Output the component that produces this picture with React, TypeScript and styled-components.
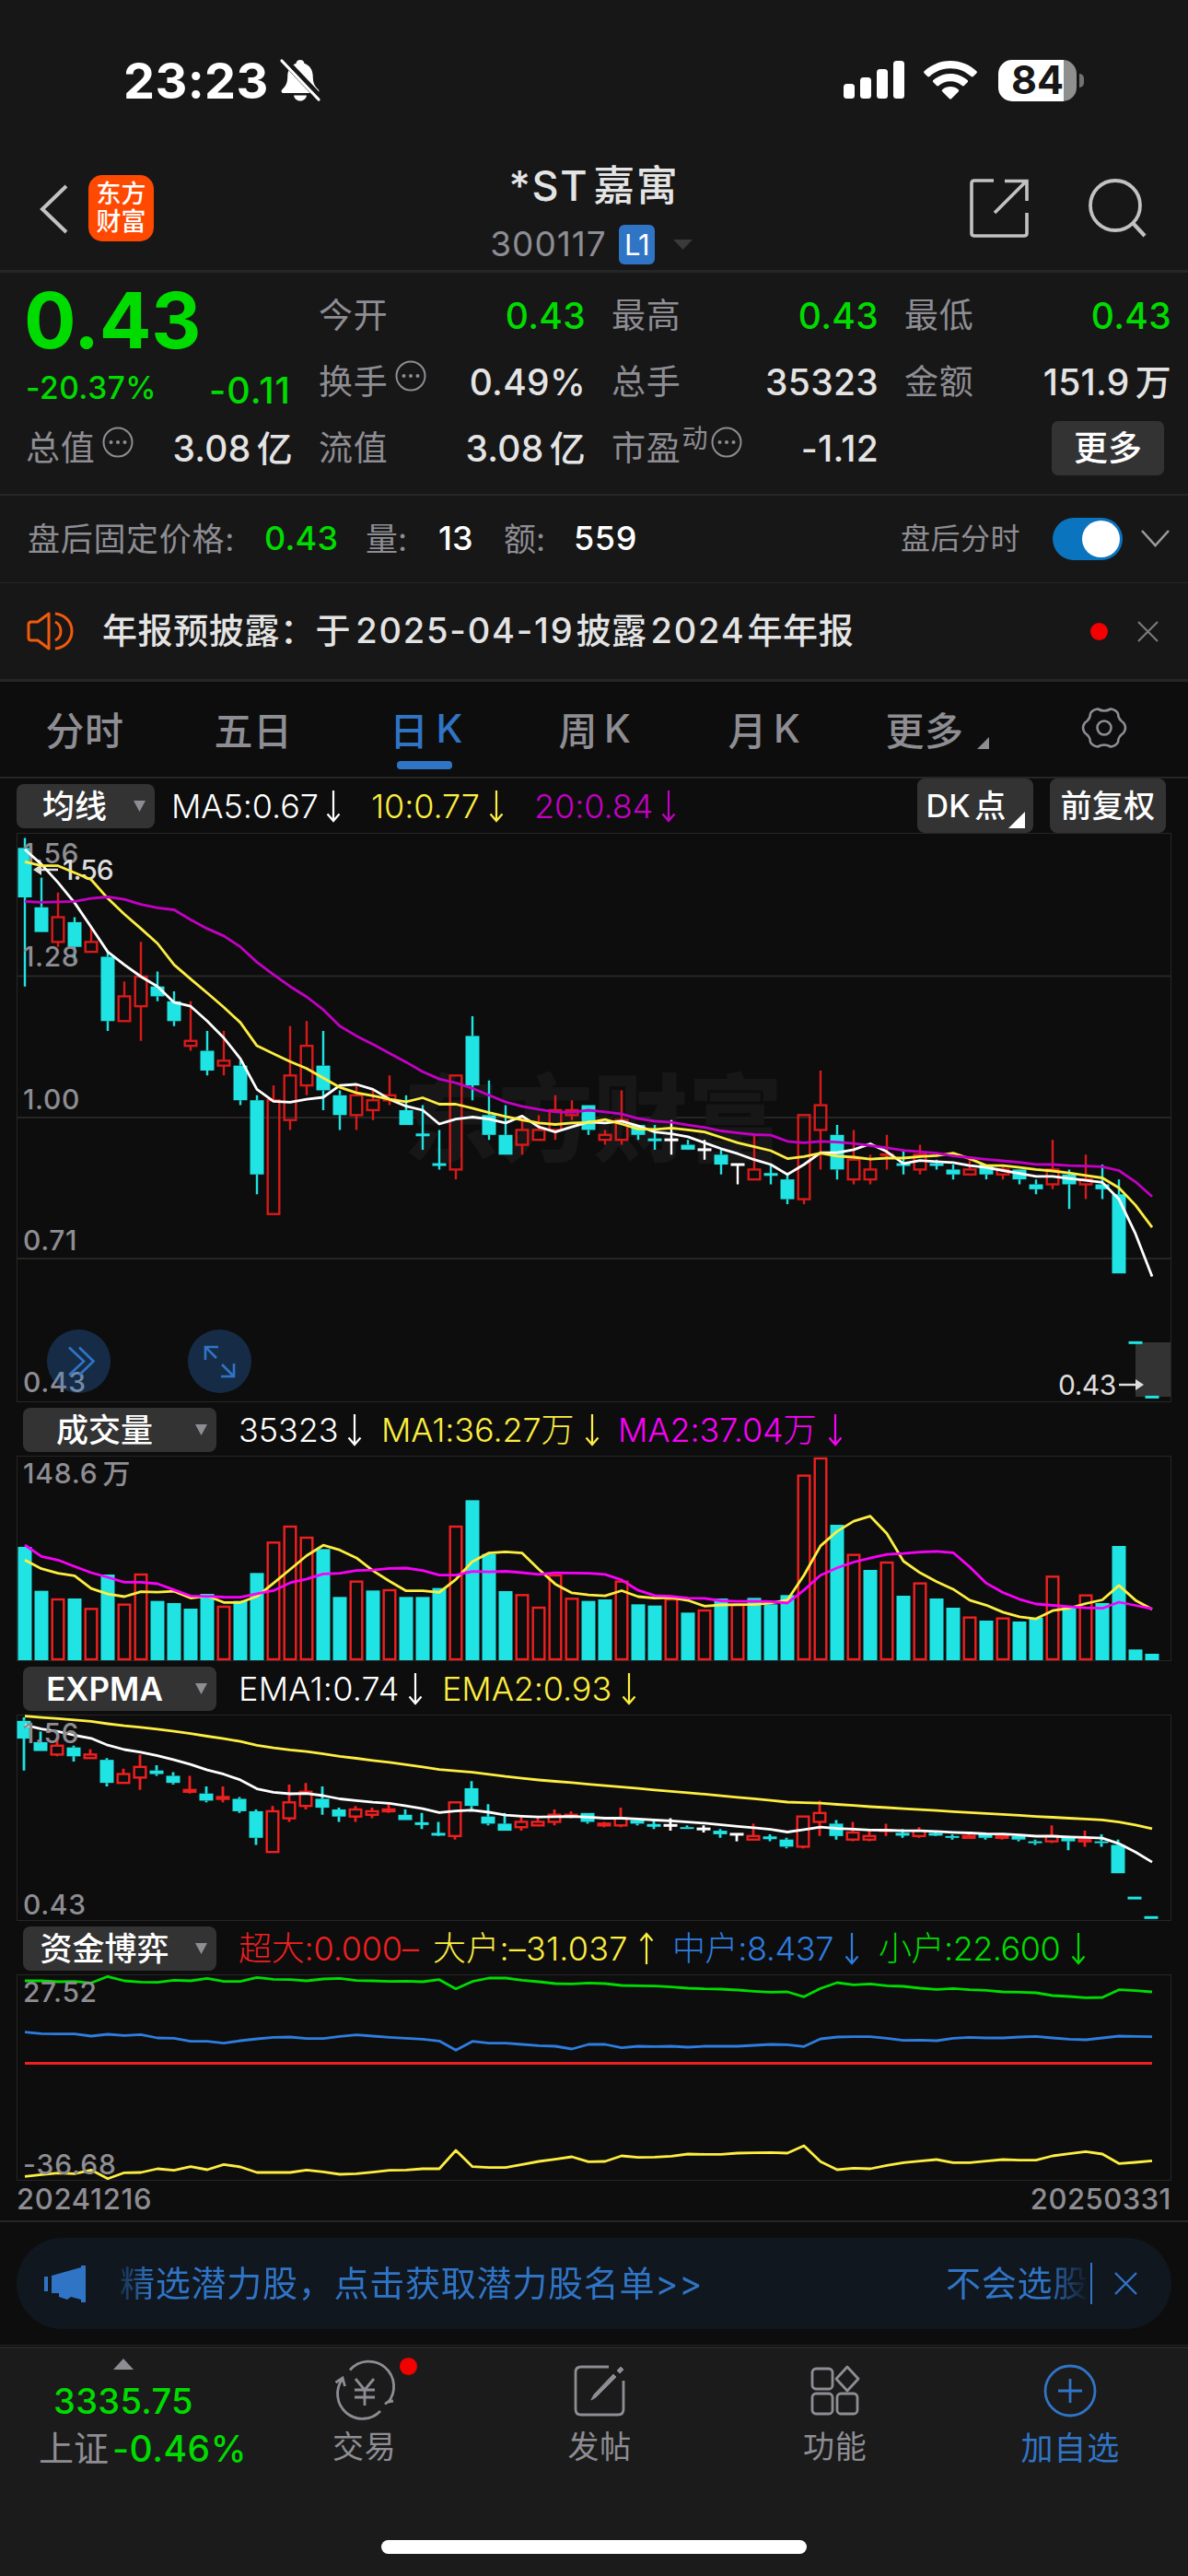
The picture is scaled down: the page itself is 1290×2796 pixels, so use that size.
import React from "react";
import styled, { createGlobalStyle } from "styled-components";

const C = {
  green: "#00dc00",
  gray: "#8e8d93",
  light: "#e4e4e4",
  blue: "#3074c6",
  cyan: "#20e3e3",
  red: "#f02020",
  candleRed: "#d91a1a",
  yellow: "#fdee41",
  purple: "#c400c4",
  magenta: "#fa00fa",
  line: "#262626",
  btn: "#333333",
  panel: "#171717",
  page: "#0d0d0d",
};

const Global = createGlobalStyle`
  * { box-sizing: border-box; }
  body { margin: 0; background: ${C.page}; }
  body, svg text { font-family: Inter, "Noto Sans CJK SC", sans-serif; }
`;

const Screen = styled.div`
  width: 1290px;
  height: 2796px;
  overflow: hidden;
  display: flex;
  flex-direction: column;
  background: ${C.page};
  color: ${C.light};
  & > * { flex-shrink: 0; }
`;

type TxtProps = { $s?: number; $c?: string; $w?: number; $ls?: number; $ml?: number; $mt?: number; $width?: number };
const Txt = styled.span<TxtProps>`
  display: block;
  flex: none;
  white-space: nowrap;
  line-height: 1.2;
  font-size: ${(p) => p.$s ?? 38}px;
  color: ${(p) => p.$c ?? C.light};
  font-weight: ${(p) => p.$w ?? 400};
  letter-spacing: ${(p) => p.$ls ?? 0}px;
  margin-left: ${(p) => p.$ml ?? 0}px;
  margin-top: ${(p) => p.$mt ?? 0}px;
  ${(p) => (p.$width ? `width: ${p.$width}px;` : "")}
`;
const Gap = styled.span<{ $l?: number; $r?: number; $ls?: number }>`
  margin-left: ${(p) => p.$l ?? 0}px;
  margin-right: ${(p) => p.$r ?? 0}px;
  ${(p) => (p.$ls !== undefined ? `letter-spacing: ${p.$ls}px;` : "")}
`;

const Icon = styled.svg<{ $ml?: number; $mt?: number }>`
  display: block;
  flex: none;
  margin-left: ${(p) => p.$ml ?? 0}px;
  margin-top: ${(p) => p.$mt ?? 0}px;
  overflow: visible;
`;

/* ---------- status bar ---------- */
const StatusBar = styled.div`
  height: 174px;
  padding: 0 113px 0 134px;
  display: flex;
  align-items: center;
  background: ${C.panel};
`;
const Spacer = styled.div`flex: 1;`;
const Battery = styled.div`
  width: 85px;
  height: 45px;
  margin-left: 23px;
  border-radius: 15px;
  background: linear-gradient(90deg, #fff 71px, #8f8f8f 71px);
  display: flex;
  align-items: center;
  justify-content: center;
`;
const BatteryNub = styled.div`
  width: 5px;
  height: 15px;
  margin-left: 3px;
  border-radius: 0 5px 5px 0;
  background: #727272;
`;

/* ---------- header ---------- */
const Header = styled.header`
  height: 122px;
  border-bottom: 3px solid ${C.line};
  background: ${C.panel};
  display: grid;
  grid-template-columns: 430px 1fr 430px;
`;
const HeadLeft = styled.div`
  display: flex;
  align-items: flex-start;
  padding: 16px 0 0 42px;
`;
const Logo = styled.div`
  width: 71px;
  height: 72px;
  margin-left: 23px;
  border-radius: 15px;
  background: #ff4800;
  color: #fff;
  display: flex;
  flex-direction: column;
  align-items: center;
  justify-content: center;
  font-size: 27px;
  line-height: 30px;
  font-weight: 500;
`;
const HeadMid = styled.div`
  display: flex;
  flex-direction: column;
  align-items: center;
`;
const CodeRow = styled.div`
  display: flex;
  align-items: center;
  height: 44px;
  margin: 14px 0 0 -6px;
`;
const Badge = styled.div`
  width: 39px;
  height: 43px;
  margin: 0 20px 0 13px;
  border-radius: 6px;
  background: ${C.blue};
  color: #fff;
  font-size: 31px;
  line-height: 43px;
  letter-spacing: -1px;
  text-align: center;
`;
const HeadRight = styled.div`
  display: flex;
  justify-content: flex-end;
  padding: 20px 45px 0 0;
  gap: 64px;
`;

/* ---------- quote ---------- */
const Quote = styled.section`
  height: 242px;
  padding: 11px 20px 0 28px;
  border-bottom: 2px solid ${C.line};
  background: ${C.panel};
  display: grid;
  grid-template-columns: repeat(4, 288px);
  grid-template-rows: repeat(3, 72px);
  column-gap: 30px;
`;
const PriceBlock = styled.div`
  grid-row: span 2;
  display: flex;
  flex-direction: column;
`;
const Price = styled.div`
  height: 82px;
  line-height: 82px;
  margin-left: -2px;
  font-size: 84px;
  font-weight: 700;
  letter-spacing: -0.3px;
  color: ${C.green};
`;
const ChangeRow = styled.div`
  height: 66px;
  display: flex;
  align-items: center;
  justify-content: space-between;
`;
const Cell = styled.div`
  display: flex;
  align-items: center;
`;
const Value = styled(Txt)`
  margin-left: auto;
  margin-right: -2px;
`;
const Sup = styled.span`
  font-size: 28px;
  color: ${C.gray};
  margin: -22px 0 0 1px;
  line-height: 30px;
`;
const MoreBtn = styled.button`
  width: 122px;
  height: 59px;
  margin: -2px 6px 0 auto;
  border: 0;
  border-radius: 7px;
  background: ${C.btn};
  color: #fff;
  font: 500 37px/59px Inter, "Noto Sans CJK SC", sans-serif;
  padding: 0;
`;

const AfterRow = styled.section`
  height: 95px;
  padding: 0 20px 0 30px;
  border-bottom: 1px solid ${C.line};
  background: ${C.panel};
  display: flex;
  align-items: center;
`;
const Toggle = styled.div`
  width: 76px;
  height: 46px;
  margin: 0 20px 0 35px;
  padding: 3px;
  border-radius: 23px;
  background: #0b74bf;
  display: flex;
  justify-content: flex-end;
`;
const Knob = styled.div`
  width: 41px;
  height: 40px;
  border-radius: 50%;
  background: #fff;
`;
const Notice = styled.section`
  height: 107px;
  padding: 0 32px 0 29px;
  border-bottom: 3px solid ${C.line};
  background: ${C.panel};
  display: flex;
  align-items: center;
`;
const Dot = styled.div`
  width: 19px;
  height: 19px;
  border-radius: 50%;
  background: #f50000;
`;

/* ---------- tabs ---------- */
const Tabs = styled.nav`
  height: 105px;
  border-bottom: 2px solid ${C.line};
  display: grid;
  grid-template-columns: 184px 182px 194px 172px 196px 179px 183px;
`;
const Tab = styled.div<{ $on?: boolean }>`
  display: flex;
  justify-content: center;
  align-items: center;
  padding-bottom: 3px;
  font-size: 42px;
  letter-spacing: 0.5px;
  font-weight: 500;
  color: ${(p) => (p.$on ? C.blue : C.gray)};
  position: relative;
  ${(p) =>
    p.$on
      ? `&::after { content: ""; position: absolute; bottom: 8px; left: 65px; width: 60px; height: 9px; border-radius: 4px; background: ${C.blue}; }`
      : ""}
`;

/* ---------- indicator rows ---------- */
const LegendRow = styled.div<{ $h: number; $pad: number; $pl: number }>`
  height: ${(p) => p.$h}px;
  padding: ${(p) => p.$pad}px 24px 0 ${(p) => p.$pl}px;
  display: flex;
  align-items: flex-start;
`;
const PickBtn = styled.div<{ $wide?: boolean; $bold?: boolean }>`
  width: ${(p) => (p.$wide ? 210 : 150)}px;
  height: 48px;
  flex: none;
  border-radius: 8px;
  background: ${C.btn};
  color: #fff;
  display: grid;
  grid-template-columns: 1fr 14px;
  column-gap: ${(p) => (p.$wide ? 9 : 0)}px;
  align-items: center;
  justify-items: center;
  padding: 0 10px 0 0;
  font-size: 35px;
  line-height: 48px;
  font-weight: ${(p) => (p.$bold ? 600 : 500)};
`;
const Legend = styled.div<{ $c: string; $w: number; $ml?: number; $ls?: number }>`
  width: ${(p) => p.$w}px;
  height: 48px;
  flex: none;
  margin-left: ${(p) => p.$ml ?? 0}px;
  display: flex;
  align-items: center;
  color: ${(p) => p.$c};
  font-size: 36px;
  line-height: 48px;
  letter-spacing: ${(p) => p.$ls ?? -0.1}px;
  font-weight: 300;
  white-space: nowrap;
  & > svg { margin-left: auto; }
`;
const ModeBtn = styled.div`
  width: 126px;
  height: 59px;
  margin: -6px 0 0 18px;
  flex: none;
  border-radius: 8px;
  background: ${C.btn};
  color: #fff;
  font-size: 34px;
  line-height: 59px;
  font-weight: 500;
  letter-spacing: 0.4px;
  display: flex;
  justify-content: center;
`;
const Plot = styled.svg`
  display: block;
  flex: none;
  margin-left: 18px;
`;
const Dates = styled.div`
  height: 45px;
  padding: 0 18px 4px 18px;
  border-bottom: 2px solid ${C.line};
  display: flex;
  align-items: center;
  justify-content: space-between;
`;

/* ---------- banner + nav ---------- */
const BannerWrap = styled.div`
  height: 134px;
  padding: 17px 18px 0;
  border-bottom: 1px solid ${C.line};
`;
const Banner = styled.div`
  height: 99px;
  padding: 0 37px 0 30px;
  border-radius: 50px;
  background: #10171f;
  display: flex;
  align-items: center;
`;
const FadeText = styled.div<{ $w: number; $fade: string; $ml: number }>`
  width: ${(p) => p.$w}px;
  margin-left: ${(p) => p.$ml}px;
  flex: none;
  white-space: nowrap;
  color: ${C.blue};
  font-size: 38px;
  line-height: 54px;
  padding-bottom: 2px;
  letter-spacing: 0.75px;
  -webkit-mask-image: ${(p) => p.$fade};
  mask-image: ${(p) => p.$fade};
`;
const Divider = styled.div`
  width: 2px;
  height: 45px;
  margin: 0 24px 0 0;
  background: ${C.blue};
`;
const BottomBar = styled.footer`
  height: 249px;
  margin-top: 1px;
  border-top: 2px solid ${C.line};
  background: #1b1b1b;
  display: flex;
  flex-direction: column;
  justify-content: space-between;
  align-items: center;
  padding-bottom: 24px;
`;
const NavGrid = styled.div`
  width: 1290px;
  display: grid;
  grid-template-columns: 268px repeat(4, 255.5px);
`;
const IndexCell = styled.div`
  display: flex;
  flex-direction: column;
  align-items: center;
  padding-top: 11px;
`;
const IndexRow = styled.div`
  display: flex;
  align-items: center;
  align-self: flex-start;
  margin: 5px 0 0 38px;
  padding-left: 4px;
`;
const NavItem = styled.div`
  position: relative;
  display: flex;
  flex-direction: column;
  align-items: center;
  gap: 12px;
  padding-top: 17px;
`;
const NavDot = styled(Dot)`
  position: absolute;
  left: 166px;
  top: 10px;
`;
const HomeBar = styled.div`
  width: 462px;
  height: 15px;
  border-radius: 8px;
  background: #fff;
`;

/* ---------- data ---------- */
// high, body top, body bottom, low (in cents), kind: r = up, c = down, w = flat
type K = [number, number, number, number, string];
const candles: K[] = [
  [156, 154, 144, 126, "c"], [148, 142, 137, 137, "c"], [145, 140, 135, 134, "r"], [140, 139, 134, 131, "c"],
  [138, 135, 133, 133, "r"], [133, 132, 119, 117, "c"], [127, 124, 119, 119, "r"], [135, 128, 122, 115, "r"],
  [129, 126, 124, 123, "c"], [125, 123, 119, 118, "c"], [123, 115, 114, 113, "r"], [117, 113, 109, 108, "c"],
  [117, 111, 110, 108, "r"], [111, 110, 103, 102, "c"], [104, 103, 88, 84, "c"], [106, 103, 80, 80, "r"],
  [118, 108, 99, 97, "r"], [119, 114, 106, 104, "r"], [117, 110, 105, 101, "c"], [105, 104, 100, 97, "c"],
  [106, 104, 100, 97, "r"], [105, 103, 101, 99, "r"], [108, 104, 103, 102, "r"], [104, 101, 98, 98, "c"],
  [102, 96, 96, 93, "c"], [97, 90, 90, 89, "c"], [108, 108, 89, 87, "r"], [120, 116, 106, 103, "c"],
  [107, 100, 96, 95, "c"], [102, 96, 92, 92, "c"], [100, 97, 94, 92, "r"], [100, 97, 95, 95, "r"],
  [104, 101, 97, 95, "r"], [103, 101, 100, 99, "r"], [102, 102, 97, 96, "c"], [97, 96, 95, 94, "r"],
  [105, 99, 95, 94, "r"], [98, 98, 96, 95, "c"], [98, 95, 95, 93, "c"], [99, 95, 95, 92, "w"],
  [95, 94, 93, 93, "c"], [95, 93, 93, 91, "w"], [93, 92, 90, 88, "c"], [90, 90, 90, 86, "w"],
  [96, 89, 87, 87, "r"], [90, 88, 88, 86, "c"], [88, 87, 83, 82, "c"], [100, 100, 83, 82, "r"],
  [109, 102, 97, 89, "r"], [98, 96, 89, 87, "c"], [97, 91, 87, 86, "r"], [92, 89, 87, 86, "r"],
  [96, 92, 92, 89, "r"], [93, 90, 90, 88, "c"], [94, 92, 89, 88, "r"], [91, 90, 90, 89, "c"],
  [90, 89, 88, 87, "c"], [91, 89, 88, 88, "r"], [90, 90, 88, 87, "c"], [90, 89, 88, 87, "r"],
  [89, 89, 87, 86, "c"], [87, 86, 85, 84, "c"], [95, 89, 86, 85, "r"], [89, 88, 86, 81, "c"],
  [92, 87, 86, 83, "r"], [90, 86, 85, 83, "c"], [87, 84, 68, 68, "c"], [54, 54, 54, 54, "c"],
  [43, 43, 43, 43, "c"],
];
const closes = candles.map((k) => (k[4] === "c" ? k[2] : k[1]));
const X = (i: number) => 27 + 18 * i;

const average = (src: number[], n: number, head: number[]) =>
  src.map((_, i) => (i < head.length ? head[i] : src.slice(i - n + 1, i + 1).reduce((a, b) => a + b, 0) / n));
const ema = (n: number, start: number) => {
  const out = [start];
  for (let i = 1; i < closes.length; i++) out.push(out[i - 1] + ((closes[i] - out[i - 1]) * 2) / (n + 1));
  return out;
};
const points = (v: number[], y: (n: number) => number) => v.map((n, i) => `${X(i)},${y(n).toFixed(1)}`).join(" ");

const ma5 = average(closes, 5, [153.7, 150.7, 147, 142.9]);
const ma10 = average(closes, 10, [151.2, 150.4, 150.4, 149, 147.6, 143.8, 140.6, 137.7, 134.7]);
const ma20 = average(closes, 20, [
  143.2, 143, 143.1, 143.2, 143.8, 144.1, 143.6, 142.6, 141.9, 141.5, 139.5, 137.7, 136.2, 134, 130.9, 128.4, 126,
  123.9, 121.3,
]);

const volume = [
  369, 226, 201, 201, 170, 279, 184, 282, 193, 186, 168, 216, 177, 193, 284, 386, 438, 402, 362, 206, 259, 227, 231,
  206, 206, 235, 438, 521, 346, 225, 215, 174, 279, 203, 193, 198, 259, 182, 178, 201, 155, 165, 201, 182, 203, 182,
  212, 604, 660, 441, 346, 294, 321, 210, 253, 201, 171, 142, 129, 139, 126, 138, 275, 170, 214, 186, 372, 35, 21,
];
const volumeUp = new Set([
  2, 4, 6, 7, 12, 15, 16, 17, 20, 22, 26, 30, 31, 32, 33, 36, 39, 41, 43, 47, 48, 50, 52, 54, 57, 59, 62, 64,
]);
const vma1 = average(volume, 5, [326, 298, 283, 275]);
const vma2 = average(volume, 10, [375, 338, 326, 305, 285, 270, 254, 254, 249]);

const small = [
  180, 180, 183, 182, 187, 166, 180, 184, 185, 178, 180, 172, 182, 182, 169, 175, 176, 180, 174, 172, 179, 180, 182,
  181, 183, 176, 206, 182, 171, 171, 178, 183, 189, 190, 187, 189, 195, 196, 197, 200, 204, 206, 207, 210, 214, 217,
  216, 232, 205, 186, 193, 190, 196, 198, 204, 208, 205, 209, 211, 216, 217, 219, 228, 231, 235, 234, 209, 212, 216,
];
const mid = [
  347, 352, 353, 353, 360, 354, 358, 355, 366, 367, 377, 377, 383, 375, 369, 364, 363, 368, 368, 361, 356, 360, 364,
  367, 370, 376, 406, 377, 383, 383, 387, 391, 393, 402, 387, 387, 398, 393, 394, 393, 396, 393, 393, 393, 390, 387,
  388, 394, 369, 363, 362, 362, 367, 374, 373, 375, 367, 364, 366, 366, 363, 361, 366, 370, 372, 366, 360, 361, 362,
];
const large = [
  817, 811, 806, 808, 796, 824, 805, 804, 792, 797, 785, 795, 778, 786, 804, 804, 804, 796, 802, 810, 808, 803, 797,
  796, 792, 792, 732, 785, 788, 788, 778, 768, 761, 753, 769, 768, 750, 755, 754, 751, 744, 745, 745, 741, 740, 739,
  741, 717, 769, 795, 790, 792, 781, 772, 767, 762, 772, 772, 767, 762, 764, 764, 750, 743, 736, 744, 775, 771, 766,
];

/* ---------- chart pieces ---------- */
const Candles = ({ y, dx, wick, red }: { y: (p: number) => number; dx: number; wick: number; red: string }) => (
  <g>
    {candles.map(([hi, top, bot, lo, kind], i) => {
      const x = X(i) + dx;
      const color = kind === "c" ? C.cyan : kind === "r" ? red : "#fff";
      const hollow = kind === "r" && top !== bot;
      return (
        <g key={i} stroke={color} fill={color}>
          <path d={`M${x} ${y(hi)}V${y(top)}M${x} ${y(bot)}V${y(lo)}`} strokeWidth={wick} />
          {hollow ? (
            <rect x={x - 6.3} y={y(top)} width={12.6} height={y(bot) - y(top)} fill="none" strokeWidth={2.4} />
          ) : top === bot ? (
            <rect x={x - 7.5} y={y(top) - 1.5} width={15} height={3} stroke="none" />
          ) : (
            <rect x={x - 7.5} y={y(top)} width={15} height={y(bot) - y(top)} stroke="none" />
          )}
        </g>
      );
    })}
  </g>
);
const Line = ({ v, y, c }: { v: number[]; y: (n: number) => number; c: string }) => (
  <polyline points={points(v, y)} fill="none" stroke={c} strokeWidth={2.8} strokeLinejoin="round" />
);
const AxisText = ({ y, children, ls = 0.6 }: { y: number; children: React.ReactNode; ls?: number }) => (
  <text x={25} y={y + 10.5} fill={C.gray} fontSize={30} letterSpacing={ls} fontWeight={500}>
    {children}
  </text>
);
const Arrow = ({ up }: { up?: boolean }) => (
  <Icon width="16" height="36" viewBox="0 0 16 36" fill="none" stroke="currentColor" strokeWidth="2.2">
    <path d={up ? "M8 35V2M1.500 9.500 8 2l6.500 7.500" : "M8 1v33M1.500 26.500 8 34l6.500-7.500"} />
  </Icon>
);
const Caret = () => (
  <Icon width="13" height="12" viewBox="0 0 13 12">
    <path d="M0 0h13L6.500 12z" fill={C.gray} />
  </Icon>
);
const InfoDots = ({ ml = 7 }: { ml?: number }) => (
  <Icon $ml={ml} $mt={-14} width="34" height="34" viewBox="0 0 34 34" fill="none" stroke={C.gray} strokeWidth="2">
    <circle cx="17" cy="17" r="15.500" />
    <g fill={C.gray} stroke="none">
      <circle cx="9.500" cy="17" r="2" />
      <circle cx="17" cy="17" r="2" />
      <circle cx="24.500" cy="17" r="2" />
    </g>
  </Icon>
);

const priceY = (p: number) => 909.6 + (156 - p) * 5.37;
const expY = (p: number) => 1864 + (156 - p) * 1.923;
const volY = (v: number) => 1802 - v / 3;
const fundY = (v: number) => 2090 + v / 3;

const KChart = () => (
  <Plot width="1254" height="618" viewBox="18 904 1254 618">
    <rect x="18.500" y="904.500" width="1253" height="617" fill="none" stroke={C.line} />
    <path d="M19 1059.500H1271M19 1213H1271M19 1366H1271" stroke={C.line} strokeWidth="2" />
    <text x="438" y="1253" fontSize="103" fontWeight="900" fill="#171717">东方财富</text>
    <rect x="1233" y="1457" width="38" height="59" fill="#333" />
    <AxisText y={1500.5}>0.43</AxisText>
    <circle cx="85.500" cy="1477.500" r="34.500" fill="#3080e0" fillOpacity="0.27" />
    <circle cx="238.500" cy="1477.500" r="34.500" fill="#3080e0" fillOpacity="0.27" />
    <Candles y={priceY} dx={0} wick={2.4} red={C.candleRed} />
    <AxisText y={926.5}>1.56</AxisText>
    <AxisText y={1038.5}>1.28</AxisText>
    <AxisText y={1193}>1.00</AxisText>
    <AxisText y={1346.5}>0.71</AxisText>
    <text x="68" y="955" fontSize="30" fill="#ddd" fontWeight="500" letterSpacing="-1">1.56</text>
    <path d="M63 944H44" stroke="#ddd" strokeWidth="2.500" />
    <path d="M36 944l9-6v12z" fill="#ddd" />
    <Line v={ma5} y={priceY} c="#fff" />
    <Line v={ma10} y={priceY} c={C.yellow} />
    <Line v={ma20} y={priceY} c={C.purple} />
    <text x="1149" y="1514" fontSize="30" fill="#ddd" letterSpacing="-0.500">0.43</text>
    <path d="M1215 1503h20" stroke="#ddd" strokeWidth="2.500" />
    <path d="M1242 1503l-9-6v12z" fill="#ddd" />
    <g fill="none" stroke={C.blue} strokeWidth="2.600">
      <path d="M75 1462.500l16 15-16 15M86 1462.500l15.500 15-15.500 15" />
      <path d="M223 1476v-14h14M223 1462l12 12M254 1480v14h-14M254 1494l-13-13" />
    </g>
  </Plot>
);
const VolumeChart = () => (
  <Plot width="1254" height="223" viewBox="18 1580 1254 223">
    <rect x="18.500" y="1580.500" width="1253" height="222" fill="none" stroke={C.line} />
    {volume.map((v, i) =>
      volumeUp.has(i) ? (
        <rect key={i} x={X(i) - 6.3} y={volY(v) + 1} width={12.6} height={v / 3 - 2} fill="none" stroke={C.red} strokeWidth={2.4} />
      ) : (
        <rect key={i} x={X(i) - 7.5} y={volY(v)} width={15} height={v / 3} fill={C.cyan} />
      )
    )}
    <AxisText y={1599.5} ls={0.8}>
      148.6<tspan dx="5">万</tspan>
    </AxisText>
    <Line v={vma1} y={volY} c={C.yellow} />
    <Line v={vma2} y={volY} c={C.magenta} />
  </Plot>
);
const ExpmaChart = () => (
  <Plot width="1254" height="224" viewBox="18 1861 1254 224">
    <rect x="18.500" y="1861.500" width="1253" height="223" fill="none" stroke={C.line} />
    <Candles y={expY} dx={-1} wick={2.8} red={C.red} />
    <Line v={ema(12, 151.7)} y={expY} c="#fff" />
    <Line v={ema(50, 156.7)} y={expY} c={C.yellow} />
    <AxisText y={1881}>1.56</AxisText>
    <AxisText y={2067}>0.43</AxisText>
  </Plot>
);
const FundChart = () => (
  <Plot width="1254" height="224" viewBox="18 2143 1254 224">
    <rect x="18.500" y="2143.500" width="1253" height="223" fill="none" stroke={C.line} />
    <Line v={small} y={fundY} c={C.green} />
    <Line v={mid} y={fundY} c="#2e7de0" />
    <path d="M27 2239.500H1251" stroke={C.red} strokeWidth="3" />
    <Line v={large} y={fundY} c={C.yellow} />
    <AxisText y={2162}>27.52</AxisText>
    <AxisText y={2349} ls={0.9}>-36.68</AxisText>
  </Plot>
);

type StatProps = { label: string; value: string; unit?: string; green?: boolean; extra?: React.ReactNode };
const Stat = ({ label, value, unit, green, extra }: StatProps) => (
  <Cell>
    <Txt $s={37} $c={C.gray} $ls={0.8}>{label}</Txt>
    {extra}
    <Value as="div" $s={39} $w={500} $ls={0.3} $c={green ? C.green : C.light}>
      {value}
      {unit ? <Gap $l={6}>{unit}</Gap> : null}
    </Value>
  </Cell>
);

export default function App() {
  return (
    <Screen>
      <Global />
      <StatusBar>
        <Txt $s={54} $w={700} $c="#fff" $mt={2} $ls={0.4}>23:23</Txt>
        <Icon $ml={11} width="46" height="46" viewBox="0 0 46 46">
          <path d="M23 1c-2.600 0-4.200 1.600-4.400 3.800C12.500 7 9.500 12 9.300 18c-.2 8-1.500 11-5.800 15-1.800 2-.8 4 1.500 4h36c2.300 0 3.300-2 1.500-4-4.300-4-5.600-7-5.800-15-.2-6-3.200-11-9.300-13.200C27.200 2.600 25.600 1 23 1z" fill="#fff" />
          <path d="M16 39.500h14c-.6 3.500-3.300 6-7 6s-6.400-2.500-7-6z" fill="#fff" />
          <path d="M5 1 45 43" stroke={C.panel} strokeWidth="8" />
          <path d="M3 2 43 44" stroke="#fff" strokeWidth="3.200" strokeLinecap="round" />
        </Icon>
        <Spacer />
        <Icon width="66" height="42" viewBox="0 0 66 42" fill="#fff">
          <rect x="0" y="25" width="12" height="16" rx="3.500" />
          <rect x="18" y="18" width="12" height="23" rx="3.500" />
          <rect x="36" y="9" width="12" height="32" rx="3.500" />
          <rect x="54" y="0" width="12" height="41" rx="3.500" />
        </Icon>
        <Icon $ml={21} width="58" height="42" viewBox="0 0 58 42" fill="#fff">
          <path d="M29 0C18 0 8 4.300 .6 11.200c-.7.700-.7 1.500 0 2.200l3.600 3.700c.6.600 1.500.6 2.200 0C12.400 11.500 20.300 8.200 29 8.200s16.600 3.300 22.600 8.900c.7.600 1.600.6 2.200 0l3.600-3.700c.7-.7.7-1.500 0-2.200C50 4.300 40 0 29 0z" />
          <path d="M29 14c-7.200 0-13.700 2.700-18.600 7.100-.7.700-.7 1.500 0 2.200l3.700 3.700c.6.600 1.500.6 2.200.1 3.400-3 7.800-4.900 12.700-4.900s9.300 1.900 12.700 4.900c.7.500 1.600.5 2.200-.1l3.700-3.700c.7-.7.7-1.500 0-2.200C42.700 16.700 36.200 14 29 14z" />
          <path d="M29 28c-3.300 0-6.300 1.200-8.700 3.200-.7.600-.7 1.500 0 2.200l7.500 7.600c.7.700 1.700.7 2.400 0l7.500-7.600c.7-.7.7-1.600 0-2.200C35.300 29.200 32.300 28 29 28z" />
        </Icon>
        <Battery>
          <Txt $s={43} $w={700} $c={C.panel}>84</Txt>
        </Battery>
        <BatteryNub />
      </StatusBar>

      <Header>
        <HeadLeft>
          <Icon $mt={10} width="31" height="54" viewBox="0 0 31 54" fill="none" stroke="#c2c2c2" strokeWidth="4">
            <path d="M30 2 4 27l26 25" />
          </Icon>
          <Logo>
            <span>东方</span>
            <span>财富</span>
          </Logo>
        </HeadLeft>
        <HeadMid>
          <Txt $s={45} $w={500} $ls={1.6} $mt={1}>
            *ST<Gap $l={5}>嘉寓</Gap>
          </Txt>
          <CodeRow>
            <Txt $s={37} $c={C.gray} $ls={1}>300117</Txt>
            <Badge>L1</Badge>
            <Icon width="21" height="11" viewBox="0 0 21 11">
              <path d="M0 0h21L10.500 11z" fill="#3a3a3a" />
            </Icon>
          </CodeRow>
        </HeadMid>
        <HeadRight>
          <Icon width="64" height="64" viewBox="0 0 64 64" fill="none" stroke="#c2c2c2" strokeWidth="3.600">
            <path d="M26 2H5Q2 2 2 5v54q0 3 3 3h54q3 0 3-3V37M38 2.500h24V24M61 3 27 37" />
          </Icon>
          <Icon width="64" height="64" viewBox="0 0 64 64" fill="none" stroke="#c2c2c2" strokeWidth="3.800">
            <circle cx="30" cy="29" r="27" />
            <path d="m49 48 13 14" strokeWidth="4.200" />
          </Icon>
        </HeadRight>
      </Header>

      <Quote>
        <PriceBlock>
          <Price>0.43</Price>
          <ChangeRow>
            <Txt $s={33.5} $w={500} $c={C.green} $ls={0.5} $mt={2}>-20.37%</Txt>
            <Txt $s={39.5} $w={500} $c={C.green} $ls={1} $mt={10}>-0.11</Txt>
          </ChangeRow>
        </PriceBlock>
        <Stat label="今开" value="0.43" green />
        <Stat label="最高" value="0.43" green />
        <Stat label="最低" value="0.43" green />
        <Stat label="换手" value="0.49%" extra={<InfoDots />} />
        <Stat label="总手" value="35323" />
        <Stat label="金额" value="151.9" unit="万" />
        <Stat label="总值" value="3.08" unit="亿" extra={<InfoDots />} />
        <Stat label="流值" value="3.08" unit="亿" />
        <Stat
          label="市盈"
          value="-1.12"
          extra={
            <>
              <Sup>动</Sup>
              <InfoDots ml={3} />
            </>
          }
        />
        <Cell>
          <MoreBtn>更多</MoreBtn>
        </Cell>
      </Quote>

      <AfterRow>
        <Txt $s={35} $c={C.gray} $ls={0.7} $width={257}>盘后固定价格:</Txt>
        <Txt $s={36} $w={500} $c={C.green} $ls={0.2} $width={110}>0.43</Txt>
        <Txt $s={35} $c={C.gray} $width={79}>量:</Txt>
        <Txt $s={36} $w={500} $c="#fff" $width={71}>13</Txt>
        <Txt $s={35} $c={C.gray} $width={76}>额:</Txt>
        <Txt $s={36} $w={500} $c="#fff" $ls={0.6}>559</Txt>
        <Spacer />
        <Txt $s={32} $c={C.gray} $ls={0.5}>盘后分时</Txt>
        <Toggle>
          <Knob />
        </Toggle>
        <Icon width="31" height="20" viewBox="0 0 31 20" fill="none" stroke="#9a9a9a" strokeWidth="2.600">
          <path d="m1 1 14.500 16L30 1" />
        </Icon>
      </AfterRow>

      <Notice>
        <Icon width="52" height="44" viewBox="0 0 52 44" fill="none" stroke="#f25a0c" strokeWidth="3">
          <path d="M24 3v38L12 32H5q-3 0-3-3V15q0-3 3-3h7z" strokeLinejoin="round" />
          <path d="M31 12c8 4 8 16 0 20M31 3c24 3 24 35 0 38" />
        </Icon>
        <Txt $s={38} $w={500} $ls={0.6} $ml={30}>
          年报预披露：于
          <Gap $l={5} $r={2} $ls={1.8}>2025-04-19</Gap>
          披露
          <Gap $l={4} $r={2} $ls={1.8}>2024</Gap>
          年年报
        </Txt>
        <Spacer />
        <Dot />
        <Icon $ml={32} width="23" height="23" viewBox="0 0 23 23" stroke="#7a7a7a" strokeWidth="2.200">
          <path d="m1 1 21 21M22 1 1 22" />
        </Icon>
      </Notice>

      <Tabs>
        <Tab>分时</Tab>
        <Tab>五日</Tab>
        <Tab $on>
          日<Gap $l={8}>K</Gap>
        </Tab>
        <Tab>
          周<Gap $l={7}>K</Gap>
        </Tab>
        <Tab>
          月<Gap $l={7}>K</Gap>
        </Tab>
        <Tab>
          更多
          <Icon $ml={14} $mt={32} width="13" height="13" viewBox="0 0 13 13">
            <path d="M13 0v13H0z" fill={C.gray} />
          </Icon>
        </Tab>
        <Tab>
          <Icon width="50" height="46" viewBox="0 0 50 46" fill="none" stroke={C.gray} strokeWidth="2.600">
            <path d="M18 2.500q7 4 14 0 6 1 8 5 0 6 6 10 4 5.500 0 11-6 4-6 10-2 4-8 5-7-4-14 0-6-1-8-5 0-6-6-10-4-5.500 0-11 6-4 6-10 2-4 8-5z" strokeLinejoin="round" />
            <circle cx="25" cy="23" r="7.500" />
          </Icon>
        </Tab>
      </Tabs>

      <LegendRow $h={59} $pad={6} $pl={18}>
        <PickBtn>均线<Caret /></PickBtn>
        <Legend $c="#fff" $w={184} $ml={18}>MA5:0.67<Arrow /></Legend>
        <Legend $c={C.yellow} $w={144} $ml={33}>10:0.77<Arrow /></Legend>
        <Legend $c={C.purple} $w={154} $ml={33}>20:0.84<Arrow /></Legend>
        <Spacer />
        <ModeBtn>
          DK<Gap $l={4}>点</Gap>
          <Icon $ml={2} $mt={36} width="18" height="18" viewBox="0 0 18 18">
            <path d="M18 0v18H0z" fill="#fff" />
          </Icon>
        </ModeBtn>
        <ModeBtn>前复权</ModeBtn>
      </LegendRow>
      <KChart />

      <LegendRow $h={58} $pad={6} $pl={25}>
        <PickBtn $wide>成交量<Caret /></PickBtn>
        <Legend $c="#fff" $w={134} $ml={24}>35323<Arrow /></Legend>
        <Legend $c={C.yellow} $w={237} $ml={21}>MA1:36.27万<Arrow /></Legend>
        <Legend $c={C.magenta} $w={244} $ml={20}>MA2:37.04万<Arrow /></Legend>
      </LegendRow>
      <VolumeChart />

      <LegendRow $h={58} $pad={6} $pl={25}>
        <PickBtn $wide $bold>EXPMA<Caret /></PickBtn>
        <Legend $c="#fff" $w={200} $ml={24} $ls={0.2}>EMA1:0.74<Arrow /></Legend>
        <Legend $c={C.yellow} $w={211} $ml={21} $ls={-0.1}>EMA2:0.93<Arrow /></Legend>
      </LegendRow>
      <ExpmaChart />

      <LegendRow $h={58} $pad={6} $pl={25}>
        <PickBtn $wide>资金博弈<Caret /></PickBtn>
        <Legend $c={C.red} $w={198} $ml={24} $ls={-0.2}>超大:0.000–</Legend>
        <Legend $c={C.yellow} $w={240} $ml={13} $ls={0.2}>大户:–31.037<Arrow up /></Legend>
        <Legend $c="#2e7de0" $w={203} $ml={20} $ls={-0.4}>中户:8.437<Arrow /></Legend>
        <Legend $c={C.green} $w={225} $ml={21} $ls={-0.5}>小户:22.600<Arrow /></Legend>
      </LegendRow>
      <FundChart />
      <Dates>
        <Txt $s={31} $c={C.gray} $w={500} $ls={0.7}>20241216</Txt>
        <Txt $s={31} $c={C.gray} $w={500} $ls={0.5}>20250331</Txt>
      </Dates>

      <BannerWrap>
        <Banner>
          <Icon width="46" height="40" viewBox="0 0 46 40" fill={C.blue}>
            <path d="M0 12h4v16H0zM8 11 40 2V0h5v40h-5v-3l-11-3-4 3-9-3v-4H8z" />
          </Icon>
          <FadeText $w={640} $ml={36} $fade="linear-gradient(90deg, rgba(0,0,0,.25), #000 34px)">
            精选潜力股，点击获取潜力股名单&gt;&gt;
          </FadeText>
          <Spacer />
          <FadeText $w={157} $ml={0} $fade="linear-gradient(90deg, #000 110px, transparent 155px)">
            不会选股
          </FadeText>
          <Divider />
          <Icon width="25" height="25" viewBox="0 0 25 25" stroke={C.blue} strokeWidth="2.400">
            <path d="m1 1 23 23M24 1 1 24" />
          </Icon>
        </Banner>
      </BannerWrap>

      <BottomBar>
        <NavGrid>
          <IndexCell>
            <Icon width="22" height="12" viewBox="0 0 22 12">
              <path d="M11 0 22 12H0z" fill={C.gray} />
            </Icon>
            <Txt $s={38} $w={500} $c={C.green} $ls={0.3} $mt={12}>3335.75</Txt>
            <IndexRow>
              <Txt $s={38} $c={C.gray}>上证</Txt>
              <Txt $s={39} $w={500} $c={C.green} $ml={4} $ls={0.5}>-0.46%</Txt>
            </IndexRow>
          </IndexCell>
          <NavItem>
            <Icon width="66" height="58" viewBox="0 0 66 58" fill="none" stroke={C.gray} strokeWidth="2.800">
              <path d="M17 6.500A27 27 0 0 1 58 42M50 51A27 27 0 0 1 9 16M1.500 20 9 15l2.500 9M55 43.500l3-2.500 6-1" />
              <path d="m23 16 10 12 10-12M33 28v17M22 28h22M22 36h22" />
            </Icon>
            <Txt $s={34} $c={C.gray} $ls={0.8}>交易</Txt>
            <NavDot />
          </NavItem>
          <NavItem>
            <Icon width="56" height="58" viewBox="0 0 56 58" fill="none" stroke={C.gray} strokeWidth="2.800">
              <path d="M38 3H8Q2 3 2 9v40q0 6 6 6h40q6 0 6-6V18" />
              <path d="M22 33 43 11l3 3-22 22-5 3zM47 7l4-4 3 3-4 4z" fill={C.gray} strokeWidth="1" />
            </Icon>
            <Txt $s={34} $c={C.gray} $ls={0.8}>发帖</Txt>
          </NavItem>
          <NavItem>
            <Icon width="54" height="58" viewBox="0 0 54 58" fill="none" stroke={C.gray} strokeWidth="2.800">
              <rect x="2" y="5" width="22" height="22" rx="4" />
              <rect x="2" y="32" width="22" height="22" rx="4" />
              <rect x="29" y="32" width="22" height="22" rx="4" />
              <path d="m40 3 12 13-12 13-12-13z" strokeLinejoin="round" />
            </Icon>
            <Txt $s={34} $c={C.gray} $ls={0.8}>功能</Txt>
          </NavItem>
          <NavItem>
            <Icon width="58" height="58" viewBox="0 0 58 58" fill="none" stroke={C.blue} strokeWidth="2.800">
              <circle cx="29" cy="29" r="27" />
              <path d="M29 16v26M16 29h26" />
            </Icon>
            <Txt $s={35} $c={C.blue} $ls={0.8}>加自选</Txt>
          </NavItem>
        </NavGrid>
        <HomeBar />
      </BottomBar>
    </Screen>
  );
}
